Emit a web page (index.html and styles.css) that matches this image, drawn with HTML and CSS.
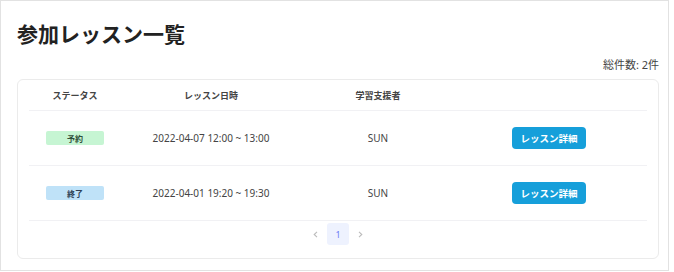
FILE: index.html
```html
<!DOCTYPE html>
<html lang="ja">
<head>
    <meta charset="UTF-8">
    <meta name="viewport" content="width=device-width, initial-scale=1.0">
    <title>参加レッスン一覧</title>
    <link rel="stylesheet" href="styles.css">
</head>
<body>
    <div class="page">
        <h1>参加レッスン一覧</h1>
        <p class="total">総件数: 2件</p>

        <!-- Lesson list card -->
        <div class="card">
            <div class="row head">
                <div>ステータス</div>
                <div>レッスン日時</div>
                <div>学習支援者</div>
                <div></div>
            </div>
            <div class="row">
                <div><span class="badge reserved">予約</span></div>
                <div>2022-04-07 12:00 ~ 13:00</div>
                <div>SUN</div>
                <div><button class="btn">レッスン詳細</button></div>
            </div>
            <div class="row">
                <div><span class="badge done">終了</span></div>
                <div>2022-04-01 19:20 ~ 19:30</div>
                <div>SUN</div>
                <div><button class="btn">レッスン詳細</button></div>
            </div>

            <!-- Pagination -->
            <div class="pager">
                <span class="arrow">
                    <svg width="5" height="7" viewBox="0 0 5 7"><path d="M4 0.8 L1.2 3.5 L4 6.2" fill="none" stroke="#bbb" stroke-width="1.1"/></svg>
                </span>
                <span class="page-num">1</span>
                <span class="arrow">
                    <svg width="5" height="7" viewBox="0 0 5 7"><path d="M1 0.8 L3.8 3.5 L1 6.2" fill="none" stroke="#bbb" stroke-width="1.1"/></svg>
                </span>
            </div>
        </div>
    </div>
</body>
</html>
```

FILE: styles.css
```css
body {
    margin: 0;
    font-family: "Noto Sans", "Noto Sans CJK JP", sans-serif;
    color: #444;
    background: #fff;
}

.page {
    box-sizing: border-box;
    width: 669px;
    height: 271px;
    border: 1px solid #e2e2e2;
    padding: 17px 9px 0 16px;
}

h1 {
    margin: 0;
    font-family: "Noto Sans CJK JP", sans-serif;
    font-size: 21px;
    font-weight: bold;
    line-height: 30px;
    color: #222;
}

.total {
    margin: 9px 0 0;
    text-align: right;
    font-size: 11px;
    line-height: 16px;
    color: #444;
}

.card {
    margin-top: 6px;
    border: 1px solid #ebebeb;
    border-radius: 6px;
    padding: 0 11px 13px;
}

.row {
    display: grid;
    grid-template-columns: 92px 180px 154px 1fr;
    align-items: center;
    height: 54px;
    border-bottom: 1px solid #f1f1f4;
    text-align: center;
    font-size: 10px;
    color: #444;
}

.row.head {
    height: 30px;
    font-family: "Noto Sans CJK JP", sans-serif;
    font-size: 9px;
    font-weight: bold;
    color: #444;
}

.badge {
    display: inline-flex;
    align-items: center;
    justify-content: center;
    width: 58px;
    height: 14px;
    border-radius: 2px;
    font-family: "Noto Sans CJK JP", sans-serif;
    font-size: 8px;
    font-weight: bold;
}

.badge.reserved {
    background-color: #c6f5d3;
    color: #2f4f3a;
}

.badge.done {
    background-color: #bfe2f8;
    color: #2c3e55;
}

.btn {
    width: 74px;
    height: 22px;
    margin-left: -4px;
    padding: 0;
    border: none;
    border-radius: 4px;
    background-color: #169fda;
    color: #fff;
    font-family: "Noto Sans CJK JP", sans-serif;
    font-size: 9.5px;
    font-weight: bold;
    cursor: pointer;
}

.pager {
    display: flex;
    justify-content: center;
    align-items: center;
    gap: 9px;
    margin-top: 2px;
}

.arrow {
    display: flex;
    align-items: center;
}

.page-num {
    display: flex;
    align-items: center;
    justify-content: center;
    width: 22px;
    height: 22px;
    border-radius: 3px;
    background-color: #eef2fe;
    color: #6a7cf5;
    font-size: 9px;
}
```
